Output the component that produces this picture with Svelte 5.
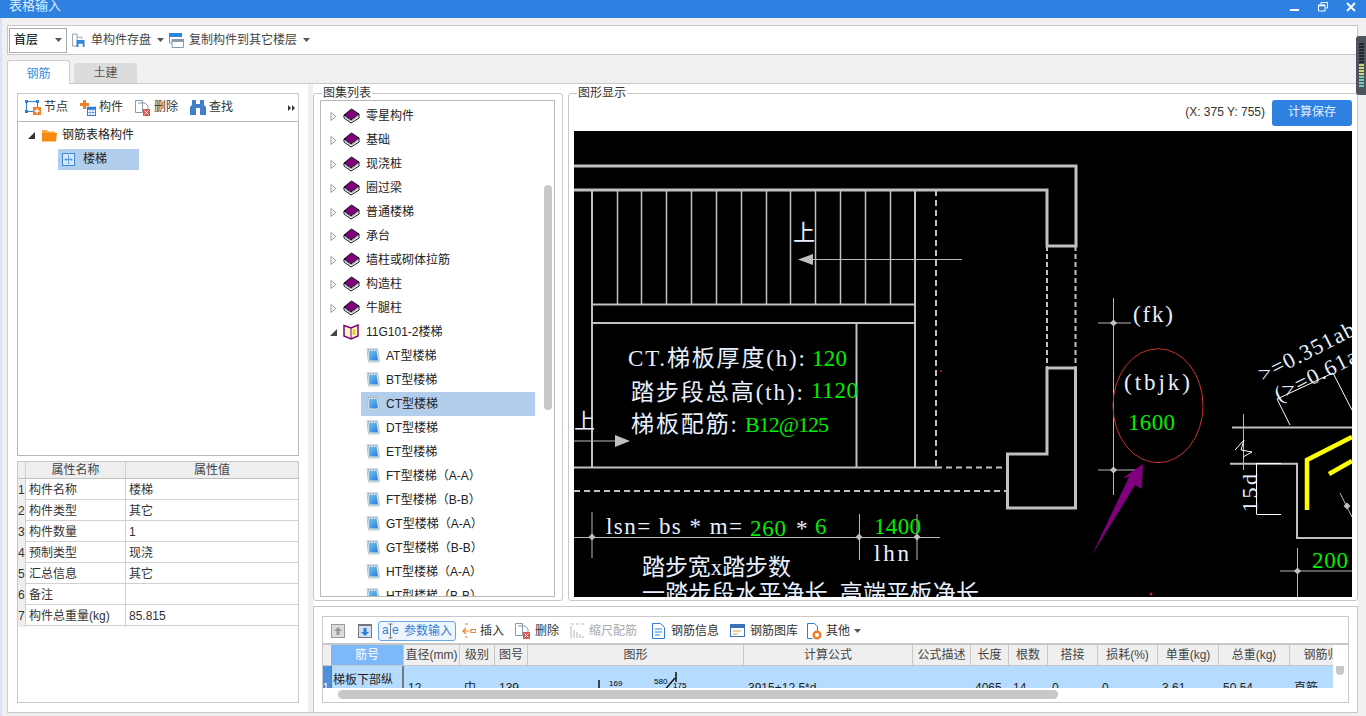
<script>
  const uiRows = [
    { n: 1, k: '构件名称', v: '楼梯' },
    { n: 2, k: '构件类型', v: '其它' },
    { n: 3, k: '构件数量', v: '1' },
    { n: 4, k: '预制类型', v: '现浇' },
    { n: 5, k: '汇总信息', v: '其它' },
    { n: 6, k: '备注', v: '' },
    { n: 7, k: '构件总重量(kg)', v: '85.815' }
  ];

  const groups = ['零星构件', '基础', '现浇桩', '圈过梁', '普通楼梯', '承台', '墙柱或砌体拉筋', '构造柱', '牛腿柱'];
  const stairs = [
    'AT型楼梯', 'BT型楼梯', 'CT型楼梯', 'DT型楼梯', 'ET型楼梯',
    'FT型楼梯（A-A）', 'FT型楼梯（B-B）', 'GT型楼梯（A-A）', 'GT型楼梯（B-B）',
    'HT型楼梯（A-A）', 'HT型楼梯（B-B）'
  ];

  const heads = ['直径(mm)', '级别', '图号', '图形', '计算公式', '公式描述', '长度', '根数', '搭接', '损耗(%)', '单重(kg)', '总重(kg)', '钢筋归类'];
  const cells = ['12', '中', '139', '', '3915+12.5*d', '', '4065', '14', '0', '0', '3.61', '50.54', '直筋'];

  const treads = [617.5, 641.5, 666.5, 691.5, 716.5, 741.5, 766.5, 790.5, 815.5, 840.5, 865.5, 890.5];

  const WHITE = '#e8f0ff';
  const GREEN = '#00ee00';
  const labels = [
    { x: 793, y: 240, t: '上', c: WHITE, s: 22 },
    { x: 628, y: 366, t: 'CT.梯板厚度(h):', c: WHITE, s: 23, w: 177 },
    { x: 812, y: 366, t: '120', c: GREEN, s: 23, w: 35 },
    { x: 631, y: 400, t: '踏步段总高(th):', c: WHITE, s: 23, w: 172 },
    { x: 811, y: 398, t: '1120', c: GREEN, s: 23, w: 47 },
    { x: 631, y: 432, t: '梯板配筋:', c: WHITE, s: 23, w: 106 },
    { x: 745, y: 432, t: 'B12@125', c: GREEN, s: 22, w: 84 },
    { x: 574, y: 428, t: '上', c: WHITE, s: 21 },
    { x: 606, y: 534, t: 'lsn= bs * m=', c: WHITE, s: 23, w: 136 },
    { x: 750, y: 536, t: '260', c: GREEN, s: 23, w: 36 },
    { x: 796, y: 536, t: '*', c: WHITE, s: 23 },
    { x: 815, y: 534, t: '6', c: GREEN, s: 23 },
    { x: 874, y: 534, t: '1400', c: GREEN, s: 23, w: 47 },
    { x: 874, y: 561, t: 'lhn', c: WHITE, s: 23, w: 35 },
    { x: 642, y: 575, t: '踏步宽x踏步数', c: WHITE, s: 23, w: 149 },
    { x: 642, y: 601, t: '一踏步段水平净长, 高端平板净长', c: WHITE, s: 23, w: 337 },
    { x: 1133, y: 322, t: '(fk)', c: WHITE, s: 23, w: 40 },
    { x: 1124, y: 390, t: '(tbjk)', c: WHITE, s: 23, w: 66 },
    { x: 1128, y: 430, t: '1600', c: GREEN, s: 23, w: 47 },
    { x: 1312, y: 568, t: '200', c: GREEN, s: 23, w: 36 }
  ];
  const diamonds = [[592, 537], [859, 537], [917, 537], [1113.5, 323], [1113.5, 470], [1297.5, 571], [1347, 506]];
</script>

{#snippet caret()}
  <svg class="caret" width="7" height="4" viewBox="0 0 7 4"><path d="M0 0h7L3.500 4z" fill="#555" /></svg>
{/snippet}

{#snippet book()}
  <svg width="17" height="16" viewBox="0 0 17 16">
    <path d="M1 7v3l7 5 8-5V6z" fill="#fff" stroke="#111" />
    <path d="M1 7 8.500 1 16 6 8 12z" fill="#800080" stroke="#111" />
    <path d="M3 9.500l5 3.500 6.500-4.500" fill="none" stroke="#999" />
  </svg>
{/snippet}

{#snippet page()}
  <svg width="14" height="16" viewBox="0 0 14 16">
    <defs>
      <linearGradient id="pg" x1="0" y1="0" x2="1" y2="1">
        <stop offset="0" stop-color="#7cc4f0" />
        <stop offset="1" stop-color="#1f7fd8" />
      </linearGradient>
    </defs>
    <path d="M1 1h10.500L13.500 14H2.500z" fill="#e4eef0" stroke="#b4c4cc" />
    <path d="M2.500 3h8l1.500 9.500H3.500z" fill="url(#pg)" />
    <path d="M2.500 1v1.500M5 1v1.500M7.500 1v1.500M10 1v1.500" stroke="#889" />
  </svg>
{/snippet}

<div class="window">
  <header class="titlebar">
    <span class="title">表格输入</span>
    <div class="winctl">
      <svg width="10" height="10" viewBox="0 0 10 10"><path d="M0 7h9v2H0z" fill="#fff" /></svg>
      <svg width="10" height="10" viewBox="0 0 10 10"><path d="M3 2V.500h6.500V6H8M.5 3h6.500v6H.5z" fill="none" stroke="#fff" /><path d="M.5 3.500h6.500" stroke="#fff" stroke-width="1.500" /></svg>
      <svg width="10" height="10" viewBox="0 0 10 10"><path d="M1 1l8 8M9 1L1 9" stroke="#fff" stroke-width="1.800" /></svg>
    </div>
  </header>

  <div class="topbar">
    <div class="floor"><span>首层</span>{@render caret()}</div>
    <div class="topbtn first">
      <svg width="13" height="15" viewBox="0 0 14 15"><path d="M.5.500h5v13h-5zM5.500 4h5v2" fill="#fff" stroke="#8a9aa8" /><rect x="5" y="7" width="8.500" height="7.500" fill="#2f86dc" /><rect x="7" y="11" width="4.500" height="3.500" fill="#fff" /></svg>
      <span>单构件存盘</span>{@render caret()}
    </div>
    <div class="topbtn second">
      <svg width="15" height="15" viewBox="0 0 15 15"><rect width="13" height="4" fill="#2f86dc" /><path d="M.5 4v6h2M3 6.500h11.500v8H3z" fill="#fff" stroke="#8a9aa8" /><rect x="3" y="6" width="12" height="3" fill="#8a9aa8" /></svg>
      <span>复制构件到其它楼层</span>{@render caret()}
    </div>
  </div>

  <nav class="tabs">
    <div class="tab active">钢筋</div>
    <div class="tab">土建</div>
  </nav>

  <div class="main">
    <aside class="left">
      <div class="lefttools">
        <div class="ltool">
          <svg width="16" height="15" viewBox="0 0 16 15"><path d="M1.500 1.500h11v10h-11z" fill="none" stroke="#2f7fd8" /><path d="M0 0h3v3H0zM11 0h3v3h-3zM0 10h3v3H0z" fill="#2f7fd8" /><rect x="8" y="7" width="8" height="8" fill="#ee7f26" /><path d="M12 8.500v5M9.500 11h5" stroke="#fff" stroke-width="1.400" /></svg>
          <span>节点</span>
        </div>
        <div class="ltool">
          <svg width="16" height="16" viewBox="0 0 16 16"><path d="M3 0h3v3h3v3H6v3H3V6H0V3h3z" fill="#ee7f26" /><rect x="7.500" y="7.500" width="8" height="8" fill="#fff" stroke="#2f7fd8" /><path d="M7 7h9v2.500H7zM10 10v5M13 10v5M8 12.500h7" fill="#2f7fd8" stroke="#2f7fd8" stroke-width=".6" /></svg>
          <span>构件</span>
        </div>
        <div class="ltool">
          <svg width="16" height="16" viewBox="0 0 16 16"><path d="M.5.500h7v12h-7zM3 3h7l3 3v4" fill="#fff" stroke="#8a9aa8" /><rect x="8" y="9" width="7" height="7" fill="#d9534f" /><path d="M9.500 10.500l4 4M13.500 10.500l-4 4" stroke="#fff" /></svg>
          <span>删除</span>
        </div>
        <div class="ltool">
          <svg width="16" height="15" viewBox="0 0 16 15"><path d="M2 0h4v4h4V0h4v5l2 2v8h-6V8H6v7H0V7l2-2z" fill="#3f80c8" /></svg>
          <span>查找</span>
        </div>
        <svg class="more" width="7" height="6" viewBox="0 0 7 6"><path d="M0 0l3 3-3 3zM4 0l3 3-3 3z" fill="#333" /></svg>
      </div>
      <div class="tree">
        <div class="troot">
          <svg width="7" height="7" viewBox="0 0 7 7"><path d="M7 0v7H0z" fill="#333" /></svg>
          <svg width="15" height="13" viewBox="0 0 15 13"><path d="M0 1h5l1 1.500h7V5H0z" fill="#f9a53a" /><path d="M0 4h15l-1 8.500H0z" fill="#f68a10" /></svg>
          <span>钢筋表格构件</span>
        </div>
        <div class="tleaf">
          <svg width="14" height="14" viewBox="0 0 14 14"><rect x=".5" y=".5" width="12" height="12" fill="#d6e8fb" stroke="#3e88d8" /><path d="M6.500 2v9M3 6.500h7M4.500 5L3 6.500 4.500 8M8.500 5 10 6.500 8.500 8" fill="none" stroke="#3e88d8" stroke-width=".8" /></svg>
          <span>楼梯</span>
        </div>
      </div>
      <div class="props">
        <div class="prow phead"><i></i><b>属性名称</b><b>属性值</b></div>
        {#each uiRows as r}
          <div class="prow"><i>{r.n}</i><span>{r.k}</span><span>{r.v}</span></div>
        {/each}
      </div>
    </aside>

    <div class="right">
      <div class="uppers">
        <section class="group listgroup">
          <span class="legend">图集列表</span>
          <div class="listbox">
            <div class="thumb"></div>
            {#each groups as g}
              <div class="lrow">
                <svg class="closed" width="6" height="9" viewBox="0 0 6 9"><path d="M.5.500 5.500 4.500.5 8.500z" fill="#fff" stroke="#9a9a9a" /></svg>
                {@render book()}
                <span>{g}</span>
              </div>
            {/each}
            <div class="lrow">
              <svg class="closed" width="7" height="7" viewBox="0 0 7 7"><path d="M7 0v7H0z" fill="#444" /></svg>
              <svg width="17" height="16" viewBox="0 0 17 16"><path d="M1 1.500 8 4l7-3v11l-7 3-7-3z" fill="#fff7c8" stroke="#800080" stroke-width="1.500" /><path d="M8 4v11" stroke="#800080" /><rect x="9.500" y="5" width="3" height="6" fill="#e8cf40" /></svg>
              <span>11G101-2楼梯</span>
            </div>
            {#each stairs as s}
              <div class="lrow child" class:sel={s === 'CT型楼梯'}>
                {@render page()}
                <span>{s}</span>
              </div>
            {/each}
          </div>
        </section>

        <section class="group drawgroup">
          <span class="legend">图形显示</span>
          <div class="drawhead">
            <span class="coords">(X: 375 Y: 755)</span>
            <button class="save">计算保存</button>
          </div>
          <svg class="canvas" width="778" height="466" viewBox="574 131 778 466">
            <rect x="574" y="131" width="778" height="466" fill="#000" />
            <g fill="none" stroke="#c0c0c0" stroke-width="2">
              <path stroke-width="3" d="M574 166H1076V246H1047V190H574" />
              <path d="M592 190V467M915 190V467M856.500 323V467M592 304.500H915M592 323H915" />
              {#each treads as x}
                <path d="M{x} 190V304" stroke-width="1.500" />
              {/each}
              <path d="M574 467.500H936" />
              <path d="M936 190V467" stroke-dasharray="6 4" />
              <path d="M936 467.500H1008M574 491H1008" stroke-dasharray="6 4" />
              <path d="M1047 246V368M1075.500 246V368" stroke-dasharray="5 3" />
              <path stroke-width="3" d="M1007.500 454H1047V368H1075.500V508H1007.500Z" />
              <path d="M1232 427.500H1352M1230 463.700H1297V538H1352" stroke-width="2" />
            </g>
            <g fill="none" stroke="#b8b8b8" stroke-width="1">
              <path d="M812 259.500H962M574 441H616M592 537.500H940M574 537.500H592" />
              <path d="M592 512V558M859.500 514V560M917 514V560" />
              <path d="M1113.500 298V495M1098 323H1131M1098 470H1136" />
              <path d="M1243.500 414V470M1297.500 548V597M1280 571H1352M1340 493L1352 517" />
            </g>
            <path d="M798 259.500 813 254V265z M630 441 615 435V447z" fill="#c0c0c0" />
            {#each diamonds as d}
              <path d="M{d[0] - 3.500} {d[1]}L{d[0]} {d[1] - 3.500}L{d[0] + 3.500} {d[1]}L{d[0]} {d[1] + 3.500}z" fill="#c0c0c0" />
            {/each}
            <g fill="none" stroke="#fff" stroke-width="1">
              <path d="M1235 450 1244 440 1241 450 1252 452 1243 457" />
              <path d="M1256.500 463V514M1256.500 463.500H1281M1256.500 514.500H1281" />
              <path d="M1277 399 1333 373M1277 399 1290 425M1333 373 1352 410" />
            </g>
            <ellipse cx="1158" cy="405.700" rx="45" ry="57" fill="none" stroke="#c83232" />
            <path d="M1143 464 1141.700 489 1135 485 1092 555 1129 477 1123 478z" fill="#800080" />
            <path d="M1307 510V460L1352 437M1329 474 1352 461" fill="none" stroke="#ffff00" stroke-width="4.500" />
            <circle cx="941" cy="371" r="1" fill="#c02020" />
            <circle cx="1151" cy="594" r="1.500" fill="#c02020" />
            {#each labels as l}
              <text x={l.x} y={l.y} fill={l.c} font-size={l.s} textLength={l.w}>{l.t}</text>
            {/each}
            <text transform="translate(1257 512) rotate(-90)" fill={WHITE} font-size="22" textLength="38">15d</text>
            <text transform="translate(1263 382) rotate(-27)" fill={WHITE} font-size="22" textLength="105">&gt;=0.351ab</text>
            <text transform="translate(1279 402) rotate(-27)" fill={WHITE} font-size="22" textLength="90">(&gt;=0.61a</text>
          </svg>
        </section>
      </div>

      <section class="lower">
        <div class="rebar">
          <div class="rtools">
            <div class="rt up"><svg width="14" height="14" viewBox="0 0 14 14"><rect width="14" height="14" fill="#999" /><rect x="1" y="1" width="12" height="12" fill="#ddd" /><path d="M7 3 3 7h2.500v4h3V7H11z" fill="#999" /></svg></div>
            <div class="rt down"><svg width="14" height="14" viewBox="0 0 14 14"><rect width="14" height="14" fill="#777" /><rect x="1" y="2" width="12" height="11" fill="#cfe0f2" /><path d="M7 12 3 8h2.500V4h3v4H11z" fill="#2f7fd8" /></svg></div>
            <div class="rt pressed">
              <svg width="17" height="16" viewBox="0 0 17 16"><path d="M8.500 1v14M6.500 1h4M6.500 15h4" stroke="#777" fill="none" /><text x="0" y="11" font-size="12" fill="#2f7fd8">a</text><text x="10" y="11" font-size="12" fill="#2f7fd8">e</text></svg>
              <span>参数输入</span>
            </div>
            <div class="rt ins"><svg width="14" height="16" viewBox="0 0 14 16"><path d="M3 1h3M3 14h3M1 8h6M4 5 1 8l3 3M9 6.500h5v3H9z" fill="none" stroke="#e8842c" stroke-width="1.200" /></svg><span>插入</span></div>
            <div class="rt del"><svg width="16" height="16" viewBox="0 0 16 16"><path d="M.5.500h7v12h-7zM3 3h7l3 3v4" fill="#fff" stroke="#8a9aa8" /><rect x="8" y="9" width="7" height="7" fill="#d9534f" /><path d="M9.500 10.500l4 4M13.500 10.500l-4 4" stroke="#fff" /></svg><span>删除</span></div>
            <div class="rt off"><svg width="15" height="16" viewBox="0 0 15 16"><path d="M1 1h3M6 1h3M11 1h3M1 3v12M4 7v8M7 9v6M10 11v4M13 13v2" stroke="#b5b5b5" fill="none" /></svg><span>缩尺配筋</span></div>
            <div class="rt info"><svg width="13" height="16" viewBox="0 0 13 16"><path d="M.5.500h8l4 4v11H.5zM3 6h7M3 9h7M3 12h5" fill="#fff" stroke="#2f7fd8" /></svg><span>钢筋信息</span></div>
            <div class="rt lib"><svg width="15" height="13" viewBox="0 0 15 13"><rect x=".5" y=".5" width="14" height="12" fill="#fff" stroke="#3a74b8" /><rect x="1" y="1" width="13" height="3" fill="#3a74b8" /><path d="M3 7h8M3 10h5" stroke="#d8a050" /></svg><span>钢筋图库</span></div>
            <div class="rt other"><svg width="15" height="17" viewBox="0 0 15 17"><path d="M.5.500h7l3 3v5M.5.500v15h5" fill="#fff" stroke="#2f7fd8" /><circle cx="10" cy="12" r="3.300" fill="none" stroke="#ee7f26" stroke-width="2.400" /></svg><span>其他</span>{@render caret()}</div>
          </div>

          <div class="sheet">
            <div class="line shead">
              <i></i>
              <b class="num">筋号</b>
              {#each heads as h}
                <b>{h}</b>
              {/each}
            </div>
            <div class="clip">
              <div class="line sdata">
                <i>1</i>
                <span class="num">梯板下部纵筋</span>
                {#each cells as c, i}
                  {#if i === 3}
                    <span class="shape">
                      <svg width="215" height="44" viewBox="0 0 215 44">
                        <path d="M71 14V28M147 12 135 26M148 6V16" stroke="#111" stroke-width="1.500" fill="none" />
                        <text x="81" y="20" font-size="8">169</text>
                        <text x="126" y="18" font-size="8">580</text>
                        <text x="145" y="22" font-size="8">175</text>
                      </svg>
                    </span>
                  {:else}
                    <span>{c}</span>
                  {/if}
                {/each}
              </div>
              <div class="vthumb"></div>
            </div>
            <div class="hscroll"><div class="hthumb"></div></div>
          </div>
        </div>
      </section>
    </div>
  </div>

  <div class="grip">
    {#each Array(15) as _, i}
      <i class:lime={i >= 7 && i < 11} class:teal={i >= 11}></i>
    {/each}
  </div>
</div>

<style>
  :global(body) {
    margin: 0;
    background: #f0f0f0;
    overflow: hidden;
  }
  .window {
    position: relative;
    width: 1366px;
    height: 716px;
    overflow: hidden;
    font: 12px/1.2 "Liberation Sans", "Noto Sans CJK SC", sans-serif;
    color: #222;
    box-shadow: inset 2px 0 #d8e2f2;
  }
  .titlebar {
    height: 18px;
    background: #2e80e1;
    display: flex;
    justify-content: space-between;
    align-items: center;
    padding: 0 10px 0 9px;
    color: #dfeeff;
  }
  .title {
    margin-top: -6px;
    font-size: 13px;
  }
  .winctl {
    display: flex;
    gap: 18px;
    margin-top: -4px;
  }
  .topbar {
    margin: 7px 8px 0 7px;
    height: 28px;
    border: 1px solid #c8c8c8;
    background: #fff;
    display: flex;
    align-items: center;
    padding-left: 1px;
  }
  .floor {
    width: 48px;
    height: 23px;
    border: 1px solid #aaa;
    display: flex;
    align-items: center;
    justify-content: space-between;
    padding: 0 4px;
    color: #000;
  }
  .topbtn {
    display: flex;
    align-items: center;
    gap: 6px;
    color: #444;
  }
  .first { margin-left: 5px; }
  .second { margin-left: 5px; gap: 5px; }
  .second .caret { margin-left: 1px; }
  .caret { flex: none; }
  .tabs {
    height: 28px;
    display: flex;
    align-items: flex-end;
    gap: 4px;
    padding-left: 7px;
    margin-right: 8px;
  }
  .tab {
    width: 63px;
    height: 20px;
    background: #dcdcdc;
    border-radius: 3px 3px 0 0;
    text-align: center;
    line-height: 21px;
    color: #555;
  }
  .tab.active {
    height: 24px;
    line-height: 26px;
    box-sizing: border-box;
    background: #fff;
    border: 1px solid #ccc;
    border-bottom: 0;
    color: #3d8be0;
    margin-bottom: -1px;
  }
  .main {
    margin: 0 8px 0 7px;
    height: 630px;
    box-sizing: border-box;
    border-top: 1px solid #c8c8c8;
    border-bottom: 1px solid #c4c8d0;
    border-left: 1px solid #c8ccd4;
    display: flex;
    gap: 5px;
  }
  .left {
    width: 300px;
    background: #fff;
    padding: 9px 9px 0 9px;
    box-sizing: border-box;
    display: flex;
    flex-direction: column;
  }
  .lefttools {
    height: 27px;
    border: 1px solid #c8c8c8;
    border-bottom: 0;
    display: flex;
    align-items: center;
    padding-left: 7px;
    color: #333;
  }
  .ltool {
    display: flex;
    align-items: center;
    gap: 3px;
    width: 55px;
  }
  .more {
    margin-left: auto;
    margin-right: 3px;
  }
  .tree {
    height: 333px;
    border: 1px solid #b8b8b8;
  }
  .troot {
    display: flex;
    align-items: center;
    height: 24px;
    padding: 1px 0 0 10px;
    gap: 7px;
    color: #222;
  }
  .troot span { margin-left: -2px; }
  .tleaf {
    margin: 2px 0 0 40px;
    width: 81px;
    height: 21px;
    background: #b3cdec;
    display: flex;
    align-items: center;
    gap: 7px;
    padding-left: 4px;
    box-sizing: border-box;
  }
  .props {
    margin-top: 5px;
    height: 241px;
    border: 1px solid #c8c8c8;
    border-top: 0;
  }
  .prow {
    display: grid;
    grid-template-columns: 7px 100px 1fr;
    height: 21px;
    border-bottom: 1px solid #d0d0d0;
    box-sizing: border-box;
    align-items: stretch;
    line-height: 22px;
    color: #333;
  }
  .prow span {
    padding-left: 3px;
    border-left: 1px solid #d0d0d0;
  }
  .prow i {
    font-style: normal;
    background: #eee;
    overflow: hidden;
  }
  .phead {
    height: 18px;
    line-height: 16px;
    background: #eee;
    border-top: 1px solid #c8c8c8;
    border-bottom: 1px solid #c0c0c0;
  }
  .phead b {
    font-weight: 400;
    text-align: center;
    border-left: 1px solid #d0d0d0;
    color: #444;
  }
  .right {
    flex: 1;
    min-width: 0;
    background: #fff;
    display: flex;
    flex-direction: column;
  }
  .uppers {
    height: 517px;
    padding-top: 9px;
    box-sizing: border-box;
    display: flex;
    gap: 5px;
  }
  .group {
    position: relative;
    box-sizing: border-box;
    height: 508px;
    border: 1px solid #c8c8c8;
    border-radius: 3px;
  }
  .legend {
    position: absolute;
    left: 8px;
    top: -8px;
    background: #fff;
    padding: 0 1px;
    color: #333;
    line-height: 14px;
  }
  .listgroup {
    width: 250px;
    padding: 6px 7px 0 6px;
  }
  .listbox {
    position: relative;
    height: 497px;
    border: 1px solid #b8b8b8;
    box-sizing: border-box;
    overflow: hidden;
    padding-top: 3px;
  }
  .thumb {
    position: absolute;
    left: 223px;
    top: 84px;
    width: 8px;
    height: 225px;
    border-radius: 4px;
    background: #c8c8c8;
  }
  .lrow {
    height: 24px;
    display: flex;
    align-items: center;
    padding-left: 9px;
    color: #222;
    width: 214px;
    box-sizing: border-box;
  }
  .closed { margin-right: 6px; flex: none; width: 7px; }
  .lrow svg + svg { margin-right: 6px; flex: none; }
  .child {
    margin-left: 40px;
    width: 174px;
    padding-left: 5px;
    gap: 6px;
  }
  .sel { background: #b3cdec; }
  .drawgroup {
    flex: 1;
    min-width: 0;
    padding: 5px 5px 0 5px;
  }
  .drawhead {
    height: 27px;
    display: flex;
    justify-content: flex-end;
    align-items: center;
    gap: 7px;
    margin-bottom: 5px;
  }
  .coords { color: #333; }
  .save {
    width: 80px;
    height: 26px;
    border: 0;
    border-radius: 3px;
    background: #2e80e1;
    color: #e6f0ff;
    font: inherit;
    padding: 0;
  }
  .canvas { display: block; }
  .canvas text {
    font-family: "Liberation Serif", "Noto Sans CJK SC", serif;
    stroke: none;
  }
  .lower {
    margin-top: 5px;
    height: 106px;
    box-sizing: border-box;
    border: 1px solid #c8c8c8;
    border-bottom: 0;
    padding: 9px 8px 0 8px;
  }
  .rebar {
    height: 87px;
    border: 1px solid #c8c8c8;
    box-sizing: border-box;
  }
  .rtools {
    height: 24px;
    padding: 2px 0 0 8px;
    display: flex;
    align-items: center;
    color: #333;
    border-bottom: 2px solid #c8c8c8;
  }
  .rt {
    display: flex;
    align-items: center;
    gap: 4px;
    flex: none;
  }
  .up { width: 27px; }
  .down { width: 20px; }
  .pressed {
    width: 78px;
    height: 20px;
    box-sizing: border-box;
    border: 1px solid #6aa7ea;
    border-radius: 3px;
    background: #eef5fd;
    color: #2f7fd8;
    padding-left: 3px;
    gap: 5px;
    margin-right: 6px;
  }
  .ins { width: 53px; }
  .del { width: 55px; }
  .off { width: 82px; color: #aaa; }
  .info { width: 78px; gap: 6px; }
  .lib { width: 77px; gap: 5px; }
  .line {
    display: grid;
    grid-template-columns: 8px 73px 56px 35px 33px 216px 169px 58px 38px 39px 50px 60px 61px 71px 76px;
    overflow: hidden;
  }
  .shead {
    height: 21px;
    background: #efefef;
    border-bottom: 1px solid #c8c8c8;
    box-sizing: border-box;
    margin-right: 15px;
    line-height: 20px;
  }
  .shead b {
    font-weight: 400;
    text-align: center;
    border-right: 1px solid #c8c8c8;
    white-space: nowrap;
    overflow: hidden;
    color: #444;
  }
  .shead .num {
    background: #7db9f8;
    color: #fff;
  }
  .clip {
    position: relative;
    height: 22px;
    overflow: hidden;
  }
  .sdata {
    height: 44px;
    background: #b5dcff;
    margin-right: 15px;
    line-height: 44px;
    color: #222;
  }
  .sdata i {
    background: #4e90dc;
    color: #fff;
    font-style: normal;
    font-size: 10px;
    overflow: hidden;
  }
  .sdata span {
    padding-left: 4px;
    white-space: nowrap;
    overflow: hidden;
  }
  .sdata .num {
    box-sizing: border-box;
    white-space: normal;
    line-height: 18px;
    padding: 5px 0 0 1px;
    background: #b5dcff;
    border-left: 1px solid #777;
    border-right: 2px solid #777;
  }
  .sdata .shape { padding: 0; }
  .shape svg { display: block; }
  .vthumb {
    position: absolute;
    right: 4px;
    top: -7px;
    width: 8px;
    height: 16px;
    border-radius: 4px;
    background: #c8c8c8;
  }
  .hscroll {
    padding: 2px 0 0 15px;
    height: 13px;
    box-sizing: border-box;
  }
  .hthumb {
    width: 720px;
    height: 9px;
    border-radius: 5px;
    background: #c8c8c8;
  }
  .grip {
    position: absolute;
    left: 1356px;
    top: 36px;
    width: 10px;
    height: 59px;
    box-sizing: border-box;
    border-radius: 3px 0 0 3px;
    background: #4d535c;
    padding-top: 7px;
    display: flex;
    flex-direction: column;
    gap: 1px;
    align-items: center;
  }
  .grip i {
    width: 5px;
    height: 2px;
    background: #26282c;
  }
  .grip .lime { background: #c8d878; }
  .grip .teal { background: #6fd0b8; }
</style>
